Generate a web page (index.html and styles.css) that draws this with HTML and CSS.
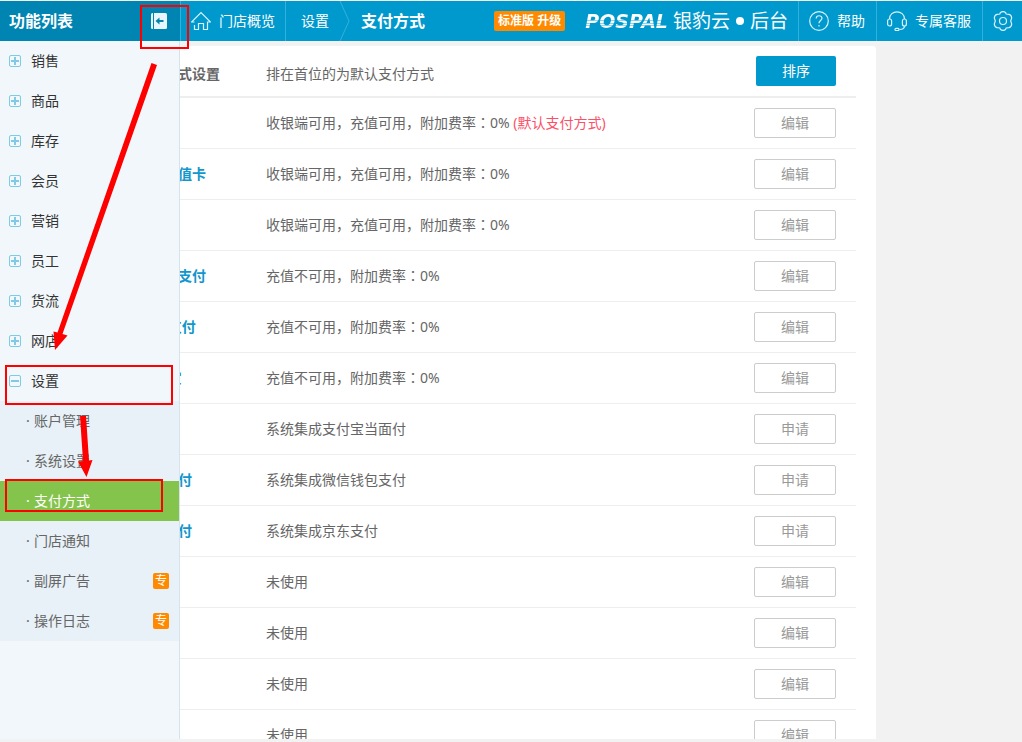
FILE: index.html
```html
<!DOCTYPE html>
<html lang="zh-CN">
<head>
<meta charset="utf-8">
<title>支付方式</title>
<link rel="stylesheet" href="styles.css">
</head>
<body>
<div class="app">
  <header class="topbar">
    <div class="menu-head">
      <h2 class="menu-title">功能列表</h2>
      <button class="collapse" aria-label="收起">
        <svg width="16" height="16" viewBox="0 0 16 16"><rect width="16" height="16" rx="1.5" fill="#e8f5fa"/><path d="M2.500 0v16" stroke="#0085b2"/><path d="M4.500 8l4-3.500v2.500h4v2h-4v2.500z" fill="#0085b2"/></svg>
      </button>
    </div>
    <nav class="crumbs">
      <a class="crumb home" href="#"><svg width="20" height="20" viewBox="0 0 20 20" fill="none" stroke="#d9f2fb" stroke-width="1.2"><path d="M3.500 11H.5L10 1.500 19.500 11h-3v7.500h-4v-6h-5v6h-4V14"/></svg>门店概览</a>
      <a class="crumb" href="#">设置</a>
      <svg class="chevron" width="12" height="40" viewBox="0 0 12 40" fill="none" stroke="#33b1dd"><path d="M1 0l9 20-9 20"/></svg>
      <h1 class="page-title">支付方式</h1>
    </nav>
    <button class="upgrade">标准版 升级</button>
    <div class="brand"><span class="logo">POSPAL</span><span class="brand-name">银豹云</span><span class="dot"></span><span class="brand-name">后台</span></div>
    <nav class="tools">
      <a class="tool" href="#"><svg width="20" height="20" viewBox="0 0 20 20" fill="none" stroke="#d9f2fb" stroke-width="1.200"><circle cx="10" cy="10" r="9.300"/><path d="M7.200 7.500c0-3.700 5.800-3.600 5.800-.2 0 2.200-3 2.400-3 5M10 14v1.600"/></svg>帮助</a>
      <a class="tool" href="#"><svg width="20" height="20" viewBox="0 0 20 20" fill="none" stroke="#d9f2fb" stroke-width="1.200"><path d="M2.500 8C2.500-1.500 17.500-1.500 17.500 8M17.500 15c0 2.500-2 3.500-5 3.500"/><rect x=".6" y="8" width="4" height="7" rx="2"/><rect x="15.400" y="8" width="4" height="7" rx="2"/><rect x="8" y="17.300" width="4" height="2.200" rx="1"/></svg>专属客服</a>
      <a class="tool" href="#" aria-label="设置"><svg width="20" height="20" viewBox="0 0 20 20" fill="none" stroke="#d9f2fb" stroke-width="1.200"><path d="M7.500 1.500Q10-.3 12.500 1.500L13.200 3 16 3.300Q18.500 4 18.700 7L17.700 10 18.700 13Q18.500 16 16 16.700L13.200 17 12.500 18.500Q10 20.300 7.500 18.500L6.800 17 4 16.700Q1.500 16 1.300 13L2.300 10 1.300 7Q1.500 4 4 3.300L6.800 3z"/><circle cx="10" cy="10" r="3.500"/></svg></a>
    </nav>
  </header>

  <div class="workspace">
    <main class="panel">
      <table class="methods">
        <colgroup><col class="col-name"><col><col class="col-action"></colgroup>
        <thead>
          <tr><th class="heading">支付方式设置</th><td class="hint">排在首位的为默认支付方式</td><td class="action"><button class="btn primary">排序</button></td></tr>
        </thead>
        <tbody>
          <tr><th>现金</th><td>收银端可用，充值可用，附加费率<span class="colon" lang="ja">：</span>0% <span class="default">(默认支付方式)</span></td><td class="action"><button class="btn">编辑</button></td></tr>
          <tr><th>会员储值卡</th><td>收银端可用，充值可用，附加费率<span class="colon" lang="ja">：</span>0%</td><td class="action"><button class="btn">编辑</button></td></tr>
          <tr><th>银联卡</th><td>收银端可用，充值可用，附加费率<span class="colon" lang="ja">：</span>0%</td><td class="action"><button class="btn">编辑</button></td></tr>
          <tr><th>自定义支付</th><td>充值不可用，附加费率<span class="colon" lang="ja">：</span>0%</td><td class="action"><button class="btn">编辑</button></td></tr>
          <tr><th>&nbsp;微信支付</th><td>充值不可用，附加费率<span class="colon" lang="ja">：</span>0%</td><td class="action"><button class="btn">编辑</button></td></tr>
          <tr><th>&nbsp;支付宝</th><td>充值不可用，附加费率<span class="colon" lang="ja">：</span>0%</td><td class="action"><button class="btn">编辑</button></td></tr>
          <tr><th>支付宝</th><td>系统集成支付宝当面付</td><td class="action"><button class="btn">申请</button></td></tr>
          <tr><th>微信支付</th><td>系统集成微信钱包支付</td><td class="action"><button class="btn">申请</button></td></tr>
          <tr><th>京东支付</th><td>系统集成京东支付</td><td class="action"><button class="btn">申请</button></td></tr>
          <tr><th></th><td>未使用</td><td class="action"><button class="btn">编辑</button></td></tr>
          <tr><th></th><td>未使用</td><td class="action"><button class="btn">编辑</button></td></tr>
          <tr><th></th><td>未使用</td><td class="action"><button class="btn">编辑</button></td></tr>
          <tr><th></th><td>未使用</td><td class="action"><button class="btn">编辑</button></td></tr>
        </tbody>
      </table>
    </main>

    <aside class="sidebar">
      <button class="group"><i class="toggle"></i>销售</button>
      <button class="group"><i class="toggle"></i>商品</button>
      <button class="group"><i class="toggle"></i>库存</button>
      <button class="group"><i class="toggle"></i>会员</button>
      <button class="group"><i class="toggle"></i>营销</button>
      <button class="group"><i class="toggle"></i>员工</button>
      <button class="group"><i class="toggle"></i>货流</button>
      <button class="group"><i class="toggle"></i>网店</button>
      <button class="group"><i class="toggle open"></i>设置</button>
      <nav class="subnav">
        <a class="sub" href="#">账户管理</a>
        <a class="sub" href="#">系统设置</a>
        <a class="sub active" href="#">支付方式</a>
        <a class="sub" href="#">门店通知</a>
        <a class="sub" href="#">副屏广告<span class="tag">专</span></a>
        <a class="sub" href="#">操作日志<span class="tag">专</span></a>
      </nav>
    </aside>
  </div>
</div>

<svg class="guide" width="200" height="520" viewBox="0 0 200 520">
  <g fill="none" stroke="#f00" stroke-width="2">
    <rect x="141" y="6" width="47" height="42"/>
    <rect x="6" y="366" width="166" height="38"/>
    <rect x="6" y="480" width="156" height="31"/>
  </g>
  <g fill="#f00">
    <path d="M151.500 63l5.500 2L62.500 334l5 1.500L55 350l-1.500-18.500 4 1z"/>
    <path d="M80 416h6l3 44.500 3.500-.5-6 17-8.500-15.500 5-.5z"/>
  </g>
</svg>
</body>
</html>
```

FILE: styles.css
```css
* {
  box-sizing: border-box;
}

body {
  margin: 0;
  overflow: hidden;
  background: #f2f2f2;
  color: #666;
  font: 14px/20px "Noto Sans", "Noto Sans CJK SC", sans-serif;
}

button {
  margin: 0;
  padding: 0;
  border: 0;
  background: none;
  color: inherit;
  font: inherit;
  cursor: pointer;
}

a {
  color: inherit;
  text-decoration: none;
}

h1,
h2 {
  margin: 0;
  font-size: 16px;
}

svg {
  display: block;
  flex: none;
}

.app {
  display: flex;
  flex-direction: column;
  height: 100vh;
  padding: 1px 0 3px;
}

/* Top bar */

.topbar {
  display: flex;
  flex: none;
  align-items: center;
  height: 40px;
  background: #0099cd;
  color: #fff;
  white-space: nowrap;
}

.menu-head {
  display: flex;
  align-items: center;
  justify-content: space-between;
  width: 180px;
  height: 40px;
  padding: 0 13px 0 9px;
  background: #0085b2;
}

.crumbs,
.tools {
  display: flex;
  align-items: center;
}

.crumb {
  display: flex;
  align-items: center;
  height: 40px;
  padding-left: 15px;
}

.home {
  gap: 8px;
  padding: 0 10px;
  border-left: 1px solid #33b1dd;
  border-right: 1px solid #33b1dd;
}

.chevron {
  margin: 0 10px;
}

.upgrade {
  height: 20px;
  margin-left: auto;
  padding: 0 4px;
  border-radius: 2px;
  background: #ff8a00;
  font-size: 12px;
  font-weight: bold;
}

.brand {
  display: flex;
  align-items: center;
  margin: 0 10px 0 20px;
}

.logo {
  margin-right: 5px;
  background: linear-gradient(#fff 9px, #8fd3ec 9px 10px, #fff 10px 12px, #8fd3ec 12px 13px, #fff 13px 14px, #8fd3ec 14px 15px, #fff 15px);
  background-clip: text;
  color: transparent;
  font: italic bold 19px/20px "DejaVu Sans", sans-serif;
}

.brand-name {
  font-size: 19px;
}

.dot {
  width: 8px;
  height: 8px;
  margin: 0 6px;
  border-radius: 50%;
  background: #fff;
}

.tool {
  display: flex;
  align-items: center;
  gap: 8px;
  height: 40px;
  padding: 0 11px 0 10px;
  border-left: 1px solid #33b1dd;
}

.tool:last-child {
  padding-right: 9px;
}

/* Content */

.workspace {
  position: relative;
  flex: 1;
  min-height: 0;
  overflow: hidden;
}

.panel {
  margin: 5px 146px 0 0;
  padding: 0 20px 0 136px;
  border-radius: 3px;
  background: #fff;
}

.methods {
  width: 100%;
  border-collapse: separate;
  border-spacing: 0;
  table-layout: fixed;
}

.col-name {
  width: 130px;
}

.col-action {
  width: 110px;
}

.methods th,
.methods td {
  height: 51px;
  padding: 0;
  border-bottom: 1px solid #eee;
  text-align: left;
}

.methods th {
  color: #1296cb;
}

.methods thead th,
.methods thead td {
  height: 52px;
  border-bottom-width: 2px;
}

.methods thead .heading,
.methods thead .hint {
  padding-top: 6px;
  color: #666;
}

.methods .action {
  padding-right: 20px;
  text-align: right;
}

.colon {
  font-family: "Noto Sans CJK JP", sans-serif;
  line-height: 1;
}

.default {
  color: #fb5168;
}

.btn {
  display: block;
  width: 82px;
  height: 30px;
  margin-left: auto;
  border: 1px solid #ccc;
  border-radius: 2px;
  color: #999;
}

.primary {
  width: 80px;
  border: 0;
  background: #0099cd;
  color: #fff;
}

/* Function menu, laid over the content */

.sidebar {
  position: absolute;
  top: 0;
  bottom: 0;
  left: 0;
  width: 180px;
  border-right: 1px solid #d3e5ea;
  background: #f1f7fa;
}

.group {
  display: flex;
  align-items: center;
  gap: 10px;
  width: 100%;
  height: 40px;
  padding-left: 9px;
  color: #333;
}

.toggle {
  width: 12px;
  height: 12px;
  border: 1px solid #7fcbe4;
  border-radius: 2px;
  background:
    linear-gradient(#7fcbe4, #7fcbe4) center / 8px 2px no-repeat,
    linear-gradient(#7fcbe4, #7fcbe4) center / 2px 8px no-repeat;
}

.toggle.open {
  background: linear-gradient(#7fcbe4, #7fcbe4) center / 8px 2px no-repeat;
}

.subnav {
  background: #e8f1f7;
}

.sub {
  display: flex;
  align-items: center;
  height: 40px;
  padding: 0 10px 0 26px;
}

.sub::before {
  content: "·";
  width: 8px;
}

.active {
  background: #85c44c;
  color: #fff;
}

.tag {
  width: 16px;
  margin-left: auto;
  border-radius: 2px;
  background: #ff8a00;
  color: #fff;
  font-size: 12px;
  line-height: 16px;
  text-align: center;
}

/* Walkthrough marks drawn over the page */

.guide {
  position: absolute;
  top: 0;
  left: 0;
  pointer-events: none;
}
```
